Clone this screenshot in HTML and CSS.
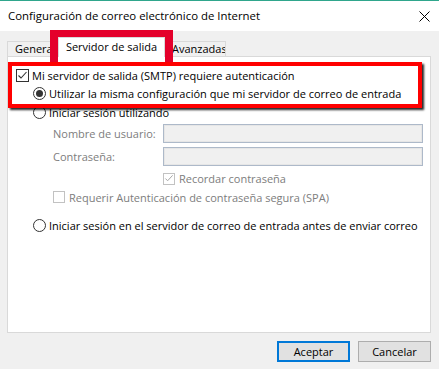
FILE: index.html
```html
<!DOCTYPE html>
<html>
<head>
<meta charset="utf-8">
<title>Configuración de correo electrónico de Internet</title>
<link rel="stylesheet" href="styles.css">
</head>
<body>
<div class="window">
	<div class="titlebar">
		<span class="title">Configuración de correo electrónico de Internet</span>
		<svg class="close" width="11" height="11" viewBox="0 0 11 11"><path d="M0.5 0.5L10.5 10.5M10.5 0.5L0.5 10.5" stroke="#000" stroke-width="1"/></svg>
	</div>
	<div class="content">
		<div class="tabs">
			<div class="tab first">General</div>
			<div class="tab active">Servidor de salida</div>
			<div class="tab last">Avanzadas</div>
		</div>
		<div class="panel">
			<div class="row r1"><span class="check"><svg width="11" height="11" viewBox="0 0 11 11"><path d="M1.5 5.5L4 8L9.5 2" fill="none" stroke="#333" stroke-width="1.1"/></svg></span>Mi servidor de salida (SMTP) requiere autenticación</div>
			<div class="row r2 indent"><span class="radio on"></span>Utilizar la misma configuración que mi servidor de correo de entrada</div>
			<div class="row r3 indent"><span class="radio"></span>Iniciar sesión utilizando</div>
			<div class="row field f1 muted"><span class="label">Nombre de usuario:</span><span class="input"></span></div>
			<div class="row field f2 muted"><span class="label">Contraseña:</span><span class="input"></span></div>
			<div class="row r6 muted"><span class="check off"><svg width="11" height="11" viewBox="0 0 11 11"><path d="M1.5 5.5L4 8L9.5 2" fill="none" stroke="#a8a8a8" stroke-width="1.1"/></svg></span>Recordar contraseña</div>
			<div class="row r7 muted"><span class="check off"></span>Requerir Autenticación de contraseña segura (SPA)</div>
			<div class="row r8 indent"><span class="radio"></span>Iniciar sesión en el servidor de correo de entrada antes de enviar correo</div>
		</div>
		<div class="buttons">
			<button class="btn default">Aceptar</button>
			<button class="btn">Cancelar</button>
		</div>
	</div>
	<div class="mark mark-tab"></div>
	<div class="mark mark-auth"></div>
</div>
</body>
</html>
```

FILE: styles.css
```css
html, body {
	margin:0;
	padding:0;
}
body {
	font-family:'Open Sans','Noto Sans',sans-serif;
	font-size:11px;
	color:#000;
	background:#f0f0f0;
}
.window {
	position:relative;
	width:439px;
	height:369px;
	border-top:1px solid #2fa68c;
	box-sizing:border-box;
	overflow:hidden;
}
.titlebar {
	height:30px;
	background:#fff;
	display:flex;
	align-items:center;
	justify-content:space-between;
	padding:0 9px 0 8px;
}
.title {
	font-size:11.4px;
	margin-top:-1px;
}
.close {
	display:block;
}
.content {
	background:#f0f0f0;
	padding:6px 8px 0 7px;
}
.tabs {
	display:flex;
	align-items:flex-end;
	height:19px;
}
.tab {
	height:15px;
	box-sizing:border-box;
	border:1px solid #d9d9d9;
	border-bottom:none;
	line-height:14px;
	padding-left:7px;
	white-space:nowrap;
	overflow:hidden;
	background:#f0f0f0;
}
.tab.first {
	width:51px;
}
.tab.last {
	width:61px;
	border-left:none;
}
.tab.active {
	width:107px;
	height:20px;
	margin-bottom:-1px;
	padding-left:0;
	text-align:center;
	line-height:17px;
	background:#fff;
	position:relative;
	z-index:1;
}
.panel {
	height:277px;
	box-sizing:border-box;
	border:1px solid #d9d9d9;
	background:#fff;
	padding:9px 0 0 8px;
}
.row {
	display:flex;
	align-items:center;
	white-space:nowrap;
}
.r1 { height:18px; }
.r2 { height:19px; }
.r3 { height:18px; }
.indent {
	padding-left:17px;
}
.field {
	height:19px;
	margin-top:3px;
	padding-left:37px;
}
.f2 {
	margin-top:4px;
}
.label {
	width:110px;
}
.input {
	width:260px;
	height:19px;
	box-sizing:border-box;
	background:#f0f0f0;
	border:1px solid #adb9c9;
	box-shadow:inset 0 0 0 1px #e6e6e6;
}
.r6 {
	height:17px;
	margin-top:4px;
	padding-left:147px;
}
.r7 {
	height:20px;
	padding-left:37px;
}
.r8 {
	height:20px;
	margin-top:8px;
}
.muted {
	color:#7d7d7d;
}
.check {
	width:13px;
	height:13px;
	box-sizing:border-box;
	border:1px solid #333;
	background:#fff;
	margin-right:3px;
	display:flex;
	align-items:center;
	justify-content:center;
}
.check.off {
	border-color:#c2c2c2;
	width:12px;
	height:12px;
	margin-right:4px;
}
.radio {
	width:13px;
	height:13px;
	box-sizing:border-box;
	border:1px solid #333;
	border-radius:50%;
	background:#fff;
	margin-right:3px;
	position:relative;
}
.radio.on::after {
	content:"";
	position:absolute;
	left:2px;
	top:2px;
	width:7px;
	height:7px;
	border-radius:50%;
	background:#333;
}
.buttons {
	display:flex;
	justify-content:flex-end;
	gap:8px;
	margin-top:8px;
}
.btn {
	width:73px;
	height:21px;
	box-sizing:border-box;
	font-family:'Open Sans','Noto Sans',sans-serif;
	font-size:11px;
	color:#000;
	background:#e1e1e1;
	border:1px solid #adadad;
	padding:0;
}
.btn.default {
	border:2px solid #0078d7;
}
.mark {
	position:absolute;
	box-sizing:border-box;
}
.mark-tab {
	left:50px;
	top:29px;
	width:123px;
	height:34px;
	border:8px solid #e4002b;
	border-top-width:7px;
	border-bottom:none;
}
.mark-auth {
	left:8px;
	top:61px;
	width:414px;
	height:46px;
	border:4px solid #ff0000;
	box-shadow:2px 2px 2px rgba(0,0,0,.85);
}
```
